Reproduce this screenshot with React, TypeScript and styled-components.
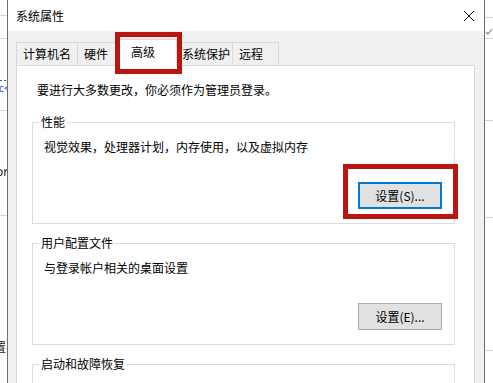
import { createGlobalStyle } from 'styled-components';
import styled from 'styled-components';

const GlobalStyle = createGlobalStyle`
  html, body {
    margin: 0;
    height: 383px;
    overflow: hidden;
    background: #ffffff;
    font-family: "Noto Sans CJK SC", "Noto Sans", sans-serif;
    font-size: 12px;
    color: #000;
  }
`;

const Desktop = styled.div`
  position: relative;
  display: flex;
  height: 383px;
  overflow: hidden;
`;

const Strip = styled.svg`
  flex: none;
  display: block;
`;

const Window = styled.div`
  flex: none;
  width: 476px;
  display: flex;
  flex-direction: column;
  background: #f0f0f0;
  border-left: 1px solid #6e6e6e;
  border-right: 1px solid #6e6e6e;
`;

const TitleBar = styled.div`
  height: 31px;
  flex: none;
  display: flex;
  align-items: center;
  justify-content: space-between;
  padding: 0 9px 0 8px;
  background: #ffffff;
`;

const Title = styled.span`
  line-height: 16px;
`;

const Body = styled.div`
  flex: 1;
  display: flex;
  flex-direction: column;
  padding: 8px 9px 0 8px;
`;

const TabList = styled.div`
  display: flex;
  align-items: flex-end;
  height: 27px;
  margin-bottom: -1px;
  position: relative;
  z-index: 1;
`;

const Tab = styled.div<{ $w: number; $selected?: boolean; $ml?: number }>`
  box-sizing: border-box;
  width: ${(p) => p.$w}px;
  height: ${(p) => (p.$selected ? 27 : 24)}px;
  margin-left: ${(p) => p.$ml ?? 0}px;
  display: flex;
  align-items: center;
  padding-left: ${(p) => (p.$selected ? 12 : 6)}px;
  padding-bottom: ${(p) => (p.$selected ? 2 : 0)}px;
  background: ${(p) => (p.$selected ? '#ffffff' : '#f0f0f0')};
  border: 1px solid #d9d9d9;
  border-bottom: ${(p) => (p.$selected ? 'none' : '1px solid #d9d9d9')};
  line-height: 16px;
  position: relative;
  z-index: ${(p) => (p.$selected ? 2 : 1)};
`;

const Panel = styled.div`
  flex: 1;
  background: #ffffff;
  border: 1px solid #d9d9d9;
  padding: 16px 19px 0 15px;
`;

const Intro = styled.p`
  margin: 0 0 0 5px;
  line-height: 16px;
`;

const Group = styled.fieldset`
  margin: 11px 0 0;
  padding: 0 12px 14px 11px;
  border: 1px solid #dcdcdc;
  min-width: 0;

  &:first-of-type {
    margin-top: 16px;
  }
`;

const Legend = styled.legend`
  margin-left: -5px;
  padding: 0 2px;
  line-height: 16px;
`;

const Desc = styled.p`
  margin: 9px 0 0;
  line-height: 16px;
`;

const ButtonRow = styled.div`
  display: flex;
  justify-content: flex-end;
  margin-top: 27px;
`;

const Button = styled.button<{ $focused?: boolean }>`
  box-sizing: border-box;
  width: 84px;
  height: 27px;
  padding: 0;
  font: inherit;
  color: #000;
  background: #e1e1e1;
  border: ${(p) => (p.$focused ? '2px solid #0078d7' : '1px solid #adadad')};
  border-radius: 0;
`;

const Highlight = styled.div<{ $x: number; $y: number; $w: number; $h: number }>`
  position: absolute;
  left: ${(p) => p.$x}px;
  top: ${(p) => p.$y}px;
  width: ${(p) => p.$w}px;
  height: ${(p) => p.$h}px;
  box-sizing: border-box;
  border: 5px solid #bb1510;
  pointer-events: none;
  z-index: 5;
`;

function CloseIcon() {
  return (
    <svg width="12" height="12" viewBox="0 0 12 12">
      <path d="M1 1 L11 11 M11 1 L1 11" stroke="#111" strokeWidth="1" fill="none" />
    </svg>
  );
}

function LeftBackdrop() {
  return (
    <Strip width="7" height="383" viewBox="0 0 7 383">
      <g stroke="#d4d4d4" strokeWidth="1">
        <line x1="0" y1="15.5" x2="7" y2="15.5" />
        <line x1="0" y1="38.5" x2="7" y2="38.5" />
        <line x1="0" y1="110.5" x2="7" y2="110.5" />
        <line x1="0" y1="215.5" x2="7" y2="215.5" />
        <line x1="0" y1="348.5" x2="7" y2="348.5" />
      </g>
      <line x1="0" y1="80.5" x2="7" y2="80.5" stroke="#3a4fb0" strokeDasharray="2 2" />
      <text x="-1" y="92" fontSize="10" fill="#3a4fb0" fontFamily="Noto Sans, sans-serif">c&lt;</text>
      <text x="-4" y="176" fontSize="12" fill="#222" fontFamily="Noto Sans, sans-serif">or</text>
      <text x="-6" y="352" fontSize="12" fill="#222" fontFamily="Noto Sans CJK SC, sans-serif">置</text>
    </Strip>
  );
}

function RightBackdrop() {
  return (
    <Strip width="8" height="383" viewBox="0 0 8 383">
      <g stroke="#d4d4d4" strokeWidth="1">
        <line x1="0" y1="17.5" x2="8" y2="17.5" />
        <line x1="0" y1="38.5" x2="8" y2="38.5" />
        <line x1="0" y1="120.5" x2="8" y2="120.5" />
        <line x1="0" y1="217.5" x2="8" y2="217.5" />
        <line x1="0" y1="350.5" x2="8" y2="350.5" />
      </g>
      <path d="M1 32 L3 34 L7 29" stroke="#888" strokeWidth="1.2" fill="none" />
    </Strip>
  );
}

export default function App() {
  return (
    <>
      <GlobalStyle />
      <Desktop>
        <LeftBackdrop />
        <Window>
          <TitleBar>
            <Title>系统属性</Title>
            <CloseIcon />
          </TitleBar>
          <Body>
            <TabList>
              <Tab $w={62}>计算机名</Tab>
              <Tab $w={43} $ml={-1}>硬件</Tab>
              <Tab $w={59} $ml={-2} $selected>高级</Tab>
              <Tab $w={58} $ml={-2}>系统保护</Tab>
              <Tab $w={47} $ml={-1}>远程</Tab>
            </TabList>
            <Panel>
              <Intro>要进行大多数更改，你必须作为管理员登录。</Intro>
              <Group>
                <Legend>性能</Legend>
                <Desc>视觉效果，处理器计划，内存使用，以及虚拟内存</Desc>
                <ButtonRow>
                  <Button $focused>设置(S)...</Button>
                </ButtonRow>
              </Group>
              <Group>
                <Legend>用户配置文件</Legend>
                <Desc>与登录帐户相关的桌面设置</Desc>
                <ButtonRow>
                  <Button>设置(E)...</Button>
                </ButtonRow>
              </Group>
              <Group>
                <Legend>启动和故障恢复</Legend>
                <Desc>系统启动、系统故障和调试信息</Desc>
                <ButtonRow>
                  <Button>设置(T)...</Button>
                </ButtonRow>
              </Group>
            </Panel>
          </Body>
        </Window>
        <RightBackdrop />
        <Highlight $x={115} $y={32} $w={67} $h={42} />
        <Highlight $x={343} $y={164} $w={115} $h={55} />
      </Desktop>
    </>
  );
}
